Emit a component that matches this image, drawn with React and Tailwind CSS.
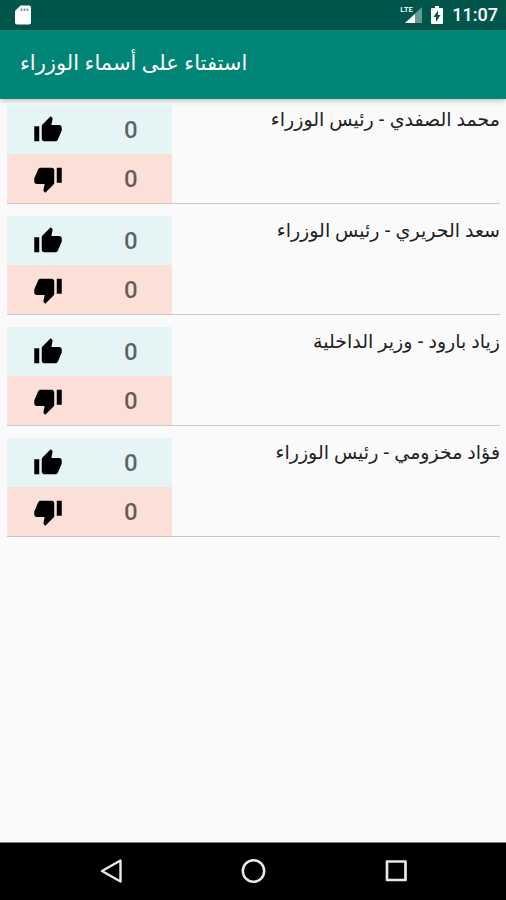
import React from "react";

const candidates = [
  { id: 1, name: "محمد الصفدي - رئيس الوزراء", up: 0, down: 0 },
  { id: 2, name: "سعد الحريري - رئيس الوزراء", up: 0, down: 0 },
  { id: 3, name: "زياد بارود - وزير الداخلية", up: 0, down: 0 },
  { id: 4, name: "فؤاد مخزومي - رئيس الوزراء", up: 0, down: 0 },
];

function ThumbUp() {
  return (
    <svg viewBox="0 0 24 24" className="size-[30px]" fill="currentColor" aria-hidden="true">
      <path d="M1 21h4V9H1v12zm22-11c0-1.100-.9-2-2-2h-6.310l.95-4.570.03-.32c0-.41-.17-.79-.44-1.060L14.170 1 7.590 7.590C7.220 7.950 7 8.450 7 9v10c0 1.100.9 2 2 2h9c.83 0 1.540-.5 1.840-1.220l3.020-7.050c.09-.23.14-.47.14-.73v-2z" />
    </svg>
  );
}

function ThumbDown() {
  return (
    <svg viewBox="0 0 24 24" className="size-[30px]" fill="currentColor" aria-hidden="true">
      <path d="M15 3H6c-.83 0-1.540.5-1.840 1.220l-3.020 7.050c-.09.23-.14.47-.14.73v2c0 1.100.9 2 2 2h6.310l-.95 4.570-.03.32c0 .41.17.79.44 1.060L9.830 23l6.590-6.590c.36-.36.58-.86.58-1.410V5c0-1.100-.9-2-2-2zm4 0v12h4V3h-4z" />
    </svg>
  );
}

function StatusBar() {
  return (
    <div className="flex h-[30px] items-center justify-between bg-[#00564b] pr-2 pl-[15px] text-white">
      <svg width="16" height="20" viewBox="0 0 16 20" aria-hidden="true">
        <path d="M5.500 0.500h8.500a2 2 0 0 1 2 2v15a2 2 0 0 1-2 2H2a2 2 0 0 1-2-2V6z" fill="#fff" />
        <path d="M6.500 3.500v2.500M9.500 3.500v2.500M12.500 3.500v2.500" stroke="#7c938f" strokeWidth="1.800" />
      </svg>
      <div className="flex items-center">
        <div className="relative h-5 w-[22px]">
          <svg width="22" height="20" viewBox="0 0 22 20" aria-hidden="true">
            <path d="M22 2v16H5z" fill="#fff" fillOpacity=".4" />
            <path d="M15 9v9H5z" fill="#fff" />
          </svg>
          <span className="absolute top-0 left-0 font-['Roboto',sans-serif] text-[8px] leading-[10px] font-medium">LTE</span>
        </div>
        <svg className="ml-[9px]" width="12" height="20" viewBox="0 0 12 20" aria-hidden="true">
          <path d="M4 1h4v2h3a1 1 0 0 1 1 1v14a1 1 0 0 1-1 1H1a1 1 0 0 1-1-1V4a1 1 0 0 1 1-1h3z" fill="#fff" />
          <path d="M7 5.500v4.500h2.500L5 17v-5H2.500z" fill="#00564b" />
        </svg>
        <time className="ml-[9px] font-['Roboto',sans-serif] text-[18px] leading-6 font-medium">11:07</time>
      </div>
    </div>
  );
}

function VoteRow({ label, count, tone, children }) {
  return (
    <div className={`grid h-[49px] grid-cols-2 items-center justify-items-center ${tone}`}>
      <button type="button" aria-label={label} className="flex text-black">
        {children}
      </button>
      <span className="font-['Roboto',sans-serif] text-[24px] leading-7 font-medium text-black/60">{count}</span>
    </div>
  );
}

function Candidate({ name, up, down }) {
  return (
    <li className="flex border-b border-[#c8c8c8]">
      <div className="w-[165px] shrink-0">
        <VoteRow label={`تأييد ${name}`} count={up} tone="bg-[#e5f5f5]">
          <ThumbUp />
        </VoteRow>
        <VoteRow label={`رفض ${name}`} count={down} tone="bg-[#fce0d8]">
          <ThumbDown />
        </VoteRow>
      </div>
      <p dir="rtl" className="min-w-0 flex-1 text-[19px] leading-7 text-[#222]">
        {name}
      </p>
    </li>
  );
}

function NavBar() {
  return (
    <nav className="flex h-[58px] items-center justify-center gap-[118px] border-t border-[#777] bg-black pb-[2px] pl-[2px] text-[#e8e8e8]">
      <button type="button" aria-label="Back" className="flex">
        <svg width="24" height="26" viewBox="0 0 24 26" fill="none" stroke="currentColor" strokeWidth="2.400" strokeLinejoin="round" aria-hidden="true">
          <path d="M21.500 2.500v21L3 13z" />
        </svg>
      </button>
      <button type="button" aria-label="Home" className="flex">
        <svg width="26" height="26" viewBox="0 0 26 26" fill="none" stroke="currentColor" strokeWidth="2.500" aria-hidden="true">
          <circle cx="12.500" cy="13" r="10.700" />
        </svg>
      </button>
      <button type="button" aria-label="Recent apps" className="flex">
        <svg width="24" height="26" viewBox="0 0 24 26" fill="none" stroke="currentColor" strokeWidth="2.700" strokeLinejoin="round" aria-hidden="true">
          <rect x="2" y="3.500" width="18.500" height="18.500" />
        </svg>
      </button>
    </nav>
  );
}

export default function App() {
  return (
    <div className="flex min-h-screen flex-col bg-[#fafafa] font-['Noto_Sans','DejaVu_Sans',sans-serif]">
      <StatusBar />
      <header className="flex h-[69px] items-center bg-[#008577] px-5 pb-[6px] shadow-[0_1px_6px_rgba(0,0,0,0.3)]">
        <h1 dir="rtl" className="text-[21px] leading-8 text-white">استفتاء على أسماء الوزراء</h1>
      </header>
      <main className="flex-1 pt-[6px] pr-[6px] pl-[7px]">
        <ul className="flex flex-col gap-3">
          {candidates.map((c) => (
            <Candidate key={c.id} {...c} />
          ))}
        </ul>
      </main>
      <NavBar />
    </div>
  );
}
